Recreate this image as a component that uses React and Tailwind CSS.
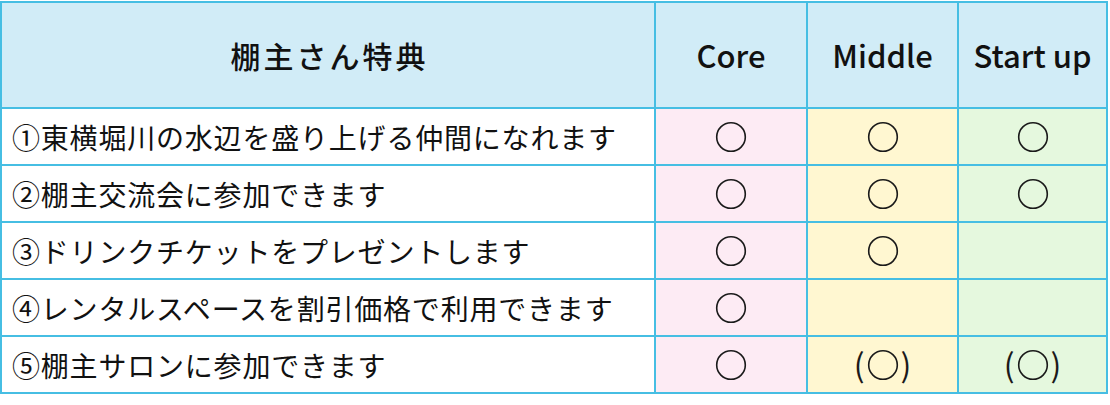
import React from "react";

const FONT = { fontFamily: '"Noto Sans CJK JP", "Noto Sans", sans-serif' };

function Circle() {
  return (
    <svg width="32" height="32" viewBox="0 0 32 32" className="block">
      <circle cx="16" cy="16" r="14.3" fill="none" stroke="#1a1a1a" strokeWidth="1.6" />
    </svg>
  );
}

function Mark({ v }) {
  if (v === "o") return <Circle />;
  if (v === "p")
    return (
      <div className="flex items-center text-[32px] leading-none text-[#1a1a1a]">
        <span className="-mt-[3px]">(</span>
        <span className="mx-[2px]"><Circle /></span>
        <span className="-mt-[3px]">)</span>
      </div>
    );
  return null;
}

const rows = [
  ["①東横堀川の水辺を盛り上げる仲間になれます", "o", "o", "o"],
  ["②棚主交流会に参加できます", "o", "o", "o"],
  ["③ドリンクチケットをプレゼントします", "o", "o", ""],
  ["④レンタルスペースを割引価格で利用できます", "o", "", ""],
  ["⑤棚主サロンに参加できます", "o", "p", "p"],
];

export default function App() {
  return (
    <div className="bg-white w-[1110px] h-[405px] pt-[1px]" style={FONT}>
      <div className="grid w-[1108px] grid-cols-[652px_150px_149px_147px] grid-rows-[104px_repeat(5,55px)] gap-[2px] bg-[#46bee3] p-[2px] text-[#111]">
        <div className="bg-[#d1ecf7] flex items-center justify-center text-[30px] tracking-[3px] font-medium pl-[3px]">棚主さん特典</div>
        <div className="bg-[#d1ecf7] flex items-center justify-center text-[31px] font-medium pt-[1px]">Core</div>
        <div className="bg-[#d1ecf7] flex items-center justify-center text-[31px] font-medium pt-[1px]">Middle</div>
        <div className="bg-[#d1ecf7] flex items-center justify-center text-[31px] font-medium pt-[1px]">Start up</div>
        {rows.map((r, i) => (
          <React.Fragment key={i}>
            <div className="bg-white flex items-center pl-[10px] text-[28px] tracking-[0.8px] whitespace-nowrap">{r[0]}</div>
            <div className="bg-[#fdebf4] flex items-center justify-center"><Mark v={r[1]} /></div>
            <div className="bg-[#fff7d1] flex items-center justify-center"><Mark v={r[2]} /></div>
            <div className="bg-[#e5f8de] flex items-center justify-center"><Mark v={r[3]} /></div>
          </React.Fragment>
        ))}
      </div>
    </div>
  );
}
